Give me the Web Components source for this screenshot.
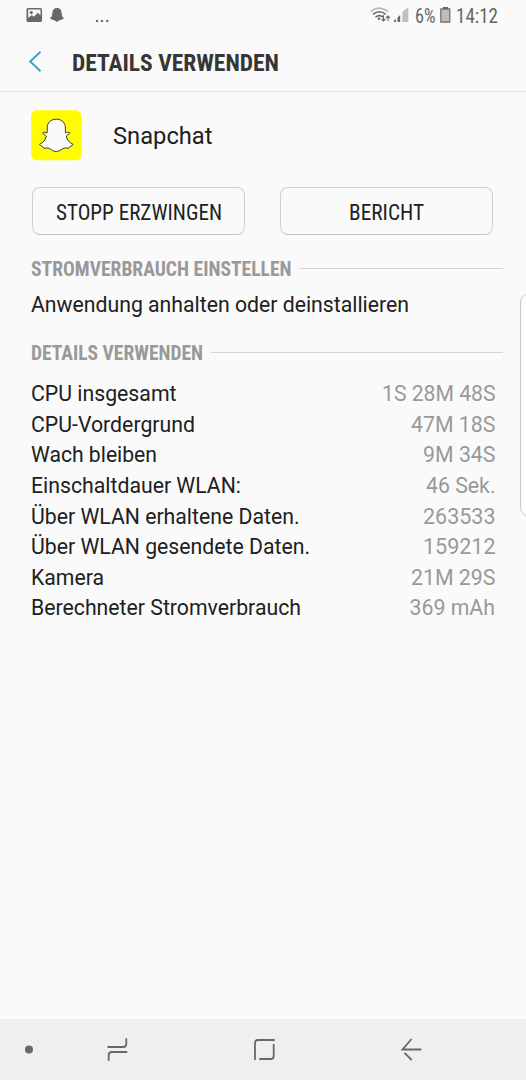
<!DOCTYPE html>
<html lang="de"><head><meta charset="utf-8"><title>Details verwenden</title>
<style>html,body{margin:0;background:#fafafa}body{font-family:"Roboto","Liberation Sans",sans-serif;color:#202020}</style></head>
<body><battery-screen></battery-screen>
<script>
// Single-line label, fitted horizontally to the width given in its "w" attribute.
class FitText extends HTMLElement{
  connectedCallback(){
    const r=this.attachShadow({mode:'open'});
    r.innerHTML=`<style>:host{display:block;flex:none;white-space:nowrap}
      span{display:inline-block;transform-origin:0 50%;white-space:nowrap}
      :host([cond]) span{font-family:"Roboto Condensed","Roboto",sans-serif;font-stretch:75%}</style><span><slot></slot></span>`;
    const w=+this.getAttribute('w'),s=r.querySelector('span');
    this.style.width=w+'px';
    s.style.transform=`translateY(var(--dy,.4px)) scaleX(${w/s.getBoundingClientRect().width})`;
  }
}
class StatusBar extends HTMLElement{
  connectedCallback(){this.attachShadow({mode:'open'}).innerHTML=`<style>
    :host{--dy:.6px;display:flex;height:32px;box-sizing:border-box;padding:0 28px 0 26px;color:#666;align-items:center;font-size:19.600px;line-height:32px}
    svg{display:block;flex:none}.sp{flex:1}</style>
    <svg width="90" height="32" viewBox="26 0 90 32"><path fill="#686868" fill-rule="evenodd" d="M28 8h12.500a1.500 1.500 0 0 1 1.500 1.500v11a1.500 1.500 0 0 1-1.500 1.500h-12.500a1.500 1.500 0 0 1-1.500-1.500v-11A1.500 1.500 0 0 1 28 8zm.2 1.500v8.600l3.600-3 2 1.700 4-4 2.700 2.700V9.500z"/><circle cx="31.300" cy="12.600" r="1.600" fill="#686868"/>
    <path fill="#686868" d="M57 8c3 0 4.600 2 4.500 4.500v1.300c1 0 1.500.4.200 1.200.5 2 2 2.700 2.300 3.300-.3.800-1.800.8-2.200 1.500-1.300-.2-2.300.7-4.800 2.200-2.500-1.500-3.500-2.400-4.800-2.200-.4-.7-1.900-.7-2.200-1.500.3-.6 1.800-1.300 2.300-3.300-1.300-.8-.8-1.200.2-1.200v-1.300C52.400 10 54 8 57 8z"/>
    <g fill="#686868"><circle cx="97" cy="21" r="1.200"/><circle cx="102" cy="21" r="1.200"/><circle cx="107.300" cy="21" r="1.200"/></g></svg>
    <span class="sp"></span>
    <svg width="45" height="32" viewBox="370 0 45 32"><g fill="none" stroke-width="1.600"><path stroke="#b8b8b8" d="M370.500 11.500Q378.800 4.700 388 11.500"/><path stroke="#666" d="M373 14.300q6.300-5 12.800 0M375.500 17.200q3.700-3 7.500-.2"/></g><circle cx="379" cy="18.700" r="1.300" fill="#666"/>
    <path stroke="#666" stroke-width="1.100" fill="none" d="M383.500 15v6m-1.900-2 1.900 2 1.900-2M388 21v-5m-1.900 2 1.900-2 1.900 2"/>
    <path fill="#666" d="M394 22v-1.500l2-1.500v3zm3.500 0v-4.500l2.700-2.500v7z"/><path fill="#c0c0c0" d="M402.300 22v-10l6-5v15z"/></svg>
    <fit-text cond w="20.500">6%</fit-text>
    <svg width="21" height="32" viewBox="435.500 0 21 32"><path fill="#bdbdbd" stroke="#777" stroke-width="1.300" d="M441.300 9h9v13h-9z"/><path fill="#666" d="M443.500 7h5v2h-5z"/><path stroke="#c47465" d="M442 21.700h8"/></svg>
    <fit-text cond w="42">14:12</fit-text>`}
}
class TitleBar extends HTMLElement{
  connectedCallback(){this.attachShadow({mode:'open'}).innerHTML=`<style>
    :host{--dy:.5px;display:flex;height:60px;box-sizing:border-box;border-bottom:1px solid #e3e3e3;padding-left:26px;align-items:center;font-size:24px;font-weight:700;color:#363636}
    svg{margin-right:25.500px}</style><svg width="20" height="60" viewBox="26 32 20 60"><path d="M40.500 51.800 30.200 61.500 40.500 71.200" fill="none" stroke="#429fc2" stroke-width="1.900"/></svg>
    <fit-text cond w="207"><slot></slot></fit-text>`}
}
class AppHeader extends HTMLElement{
  connectedCallback(){this.attachShadow({mode:'open'}).innerHTML=`<style>
    :host{display:flex;align-items:center;gap:30.500px;padding:18px 31px 0;font-size:24.300px;height:51px}</style>
    <svg width="51" height="51" viewBox="31 110 51 51"><rect x="31.200" y="110.300" width="50.300" height="50" rx="5.500" fill="#fffc00"/>
    <path fill="#fafafa" stroke="#3b3b35" stroke-width="1" stroke-linejoin="round" d="M56.300 119.200C62.500 119.200 65.500 123.500 65.400 128V132.800C67 133 68.500 131.500 69.700 132.700C70 134.200 67 134.800 66.300 136C67 140.500 69.500 142.500 73 144.300C72.500 146.300 69.500 145.800 68.700 148.300C65 147.400 63 148.200 61 149.800C58 152 54.500 152 51.500 149.800C49.500 148.200 47.500 147.400 43.900 148.300C43 145.800 40 146.300 39.500 144.300C43 142.500 45.600 140.500 46.300 136C45.500 134.800 42.500 134.200 42.900 132.700C44 131.500 45.500 133 47.200 132.800V128C47.100 123.500 50.100 119.200 56.300 119.200Z"/></svg>
    <fit-text w="99.500"><slot></slot></fit-text>`}
}
class ActionButton extends HTMLElement{
  connectedCallback(){this.attachShadow({mode:'open'}).innerHTML=`<style>
    :host{--dy:-.4px;display:block;width:213px;height:48px}button{all:unset;box-sizing:border-box;width:100%;height:100%;display:flex;justify-content:center;align-items:center;border:1px solid #d0d0d0;border-bottom-color:#c4c4c4;border-radius:8px;font-size:21.500px;padding-top:2px}</style>
    <button><fit-text cond w="${this.getAttribute('w')}"><slot></slot></fit-text></button>`}
}
class SectionTitle extends HTMLElement{
  connectedCallback(){this.attachShadow({mode:'open'}).innerHTML=`<style>
    :host{--dy:.6px;display:flex;align-items:center;gap:8px;height:24px;line-height:24px;padding:0 23px 0 30.500px;font-size:19.600px;font-weight:700;color:#999}
    i{flex:1;height:1px;background:#d6d6d6;margin-top:-2px}</style>
    <fit-text cond w="${this.getAttribute('w')}"><slot></slot></fit-text><i></i>`}
}
class StatRow extends HTMLElement{
  connectedCallback(){const g=a=>this.getAttribute(a);this.attachShadow({mode:'open'}).innerHTML=`<style>
    :host{--dy:.5px;display:flex;justify-content:space-between;height:30.640px;line-height:30.640px;font-size:21.300px}
    .v{color:#999}</style><fit-text w="${g('w')}"><slot></slot></fit-text><fit-text class="v" w="${g('vw')}">${g('value')}</fit-text>`}
}
class NavBar extends HTMLElement{
  connectedCallback(){this.attachShadow({mode:'open'}).innerHTML=`<style>
    :host{display:block;height:61px;background:#efefef}svg{display:block}</style>
    <svg width="526" height="61" viewBox="0 1019 526 61"><circle cx="29" cy="1049.500" r="4" fill="#686868"/>
    <g fill="none" stroke="#686868" stroke-width="1.800"><path d="M107.500 1047h15.500q3.300 0 3.300-3.300v-5.500M127.200 1052h-15.200q-3.300 0-3.300 3.300v5.500"/>
    <path d="M255 1060v-17q0-3 3-3h16.700M273.700 1044v12q0 3-3 3h-11.500"/>
    <path d="M421.300 1049.500H402.500L411.500 1039M404.500 1052.800l7.200 7.200"/></g></svg>`}
}
class BatteryScreen extends HTMLElement{
  connectedCallback(){this.attachShadow({mode:'open'}).innerHTML=`<style>
    :host{display:flex;flex-direction:column;width:526px;height:1080px;position:relative;overflow:hidden;background:#fafafa}
    .actions{display:flex;gap:35px;padding:26px 32px 0}.one{margin-top:22px}.link{--dy:.5px;padding-left:30.500px;font-size:21.300px;height:32px;line-height:32px;margin-top:7px}
    .two{margin-top:21px}.stats{padding:13px 31px 0 30.500px;flex:1}
    .edge{position:absolute;left:519.500px;top:294px;width:16px;height:220px;border:1px solid #c8c8c8;border-radius:8px;background:#fcfcfc}</style>
    <status-bar></status-bar><title-bar>DETAILS VERWENDEN</title-bar><app-header>Snapchat</app-header>
    <div class="actions"><action-button w="166">STOPP ERZWINGEN</action-button><action-button w="75">BERICHT</action-button></div>
    <section-title class="one" w="260.500">STROMVERBRAUCH EINSTELLEN</section-title>
    <div class="link"><fit-text w="378">Anwendung anhalten oder deinstallieren</fit-text></div>
    <section-title class="two" w="172">DETAILS VERWENDEN</section-title>
    <div class="stats">
    <stat-row w="145.500" value="1S 28M 48S" vw="113.500">CPU insgesamt</stat-row>
    <stat-row w="164" value="47M 18S" vw="84.500">CPU-Vordergrund</stat-row>
    <stat-row w="126" value="9M 34S" vw="72.500">Wach bleiben</stat-row>
    <stat-row w="210" value="46 Sek." vw="69.500">Einschaltdauer WLAN:</stat-row>
    <stat-row w="268.500" value="263533" vw="72.500">Über WLAN erhaltene Daten.</stat-row>
    <stat-row w="279" value="159212" vw="72.500">Über WLAN gesendete Daten.</stat-row>
    <stat-row w="73" value="21M 29S" vw="84.500">Kamera</stat-row>
    <stat-row w="270" value="369 mAh" vw="85.500">Berechneter Stromverbrauch</stat-row></div>
    <nav-bar></nav-bar><div class="edge"></div>`}
}
Object.entries({'fit-text':FitText,'status-bar':StatusBar,'title-bar':TitleBar,'app-header':AppHeader,'action-button':ActionButton,'section-title':SectionTitle,'stat-row':StatRow,'nav-bar':NavBar,'battery-screen':BatteryScreen}).forEach(([n,c])=>customElements.define(n,c));
</script></body></html>
